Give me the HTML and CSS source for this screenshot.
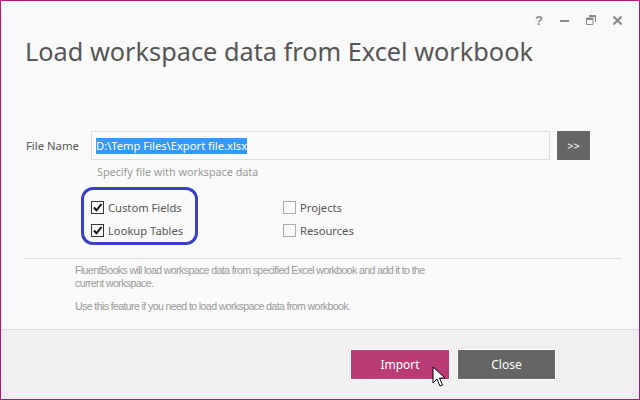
FILE: index.html
```html
<!DOCTYPE html>
<html>
<head>
<meta charset="utf-8">
<link rel="stylesheet" href="styles.css">
</head>
<body>
<div class="window">
  <div class="titlebar">
    <span class="tb-btn tb-help">?</span>
    <span class="tb-btn"><svg width="10" height="10" viewBox="0 0 10 10"><rect x="0" y="5" width="9" height="2" fill="#8a8a8a"/></svg></span>
    <span class="tb-btn"><svg width="10" height="10" viewBox="0 0 10 10"><path d="M3 0.5h6.5v6.5M0.5 3h6.5v6.5h-6.5z" fill="none" stroke="#8a8a8a" stroke-width="1"/><rect x="0.5" y="3" width="6.5" height="2" fill="#8a8a8a"/><rect x="3" y="0.5" width="6.5" height="1.5" fill="#8a8a8a"/></svg></span>
    <span class="tb-btn"><svg width="11" height="11" viewBox="0 0 11 11"><path d="M1.5 1.5l8 8M9.5 1.5l-8 8" stroke="#8a8a8a" stroke-width="2.2"/></svg></span>
  </div>
  <h1 class="title">Load workspace data from Excel workbook</h1>
  <div class="content">
    <div class="file-row">
      <label class="file-label">File Name</label>
      <div class="file-input"><span class="sel">D:\Temp Files\Export file.xlsx</span></div>
      <button class="browse">&gt;&gt;</button>
    </div>
    <div class="hint">Specify file with workspace data</div>
    <div class="checks">
      <div class="check"><span class="box checked"><svg width="11" height="11" viewBox="0 0 11 11"><path d="M2 5.5l2.5 2.8L9.5 2" fill="none" stroke="#111" stroke-width="2"/></svg></span>Custom Fields</div>
      <div class="check"><span class="box"></span>Projects</div>
      <div class="check"><span class="box checked"><svg width="11" height="11" viewBox="0 0 11 11"><path d="M2 5.5l2.5 2.8L9.5 2" fill="none" stroke="#111" stroke-width="2"/></svg></span>Lookup Tables</div>
      <div class="check"><span class="box"></span>Resources</div>
      <div class="highlight"></div>
    </div>
    <div class="sep"></div>
    <div class="desc">
      <p>FluentBooks will load workspace data from specified Excel workbook and add it to the current workspace.</p>
      <p>Use this feature if you need to load workspace data from workbook.</p>
    </div>
  </div>
  <div class="footer">
    <button class="btn btn-import">Import</button>
    <button class="btn btn-close">Close</button>
    <svg class="cursor" width="14" height="22" viewBox="0 0 14 22"><path d="M1 1v16l4-4 3 7 2.5-1-3-7h5.5z" fill="#fff" stroke="#000" stroke-width="1"/></svg>
  </div>
</div>
</body>
</html>
```
FILE: styles.css
```css
* { box-sizing: border-box; }
html, body { margin: 0; padding: 0; }
body { width: 640px; height: 400px; font-family: "Noto Sans", "Open Sans", sans-serif; }
.window {
  width: 640px; height: 400px;
  border: 1px solid #b3186f;
  background: #fafafa;
  display: flex; flex-direction: column;
}
.titlebar {
  height: 32px;
  display: flex; justify-content: flex-end; align-items: center;
  padding: 6px 9px 0 0;
}
.tb-btn { width: 26px; display: flex; justify-content: center; align-items: center; color: #8a8a8a; }
.tb-help { font: bold 13px "Liberation Sans", sans-serif; }
.title {
  margin: 0; padding-left: 24px;
  font-weight: 400; font-size: 25.3px; line-height: 36px;
  color: #555;
}
.content { flex: 1; padding: 0 17px 0 21px; position: relative; }
.file-row { display: flex; align-items: center; margin-top: 62px; height: 29px; }
.file-label { width: 69px; font-size: 11.3px; color: #555; padding-left: 4px; }
.file-input {
  width: 459px; height: 29px;
  border: 1px solid #ddd; background: #fafafa;
  display: flex; align-items: center; padding-left: 4px;
}
.sel { background: #3399ff; color: #fff; font-size: 11.2px; line-height: 16px; }
.browse {
  margin-left: 7px; width: 33px; height: 29px;
  border: none; background: #666; color: #fff; font: 11px "Noto Sans", sans-serif;
  padding: 0;
}
.hint { margin: 4px 0 0 75px; font-size: 10.8px; color: #999; }
.checks {
  position: relative;
  display: grid; grid-template-columns: 192px auto; row-gap: 7px;
  margin: 20px 0 0 69px; width: 400px;
  font-size: 11.2px; color: #555;
}
.check { display: flex; align-items: center; height: 16px; }
.box {
  width: 13px; height: 13px; border: 1px solid #aaa; background: #fafafa;
  margin-right: 4px; display: flex; align-items: center; justify-content: center;
}
.box.checked { border-color: #333; }
.highlight {
  position: absolute; left: -10px; top: -12px; width: 117px; height: 58px;
  border: 3px solid #3c40c4; border-radius: 12px;
}
.sep { height: 1px; background: #ddd; margin: 20px 0 0 1px; }
.desc { padding-left: 53px; font: 10.6px "Liberation Sans", sans-serif; letter-spacing: -0.62px; color: #999; }
.desc p { margin: 5px 0 10px; line-height: 13px; width: 352px; }
.footer {
  height: 70px; background: #f0f0f0; border-top: 1px solid #ddd;
  display: flex; justify-content: flex-end; align-items: flex-start;
  padding: 19px 83px 0 0; gap: 7px; position: relative;
}
.btn {
  width: 100px; height: 31px; border: 1px solid #fff; color: #fff;
  font: 12px "Noto Sans", sans-serif; padding: 0;
}
.btn-import { background: #b93c74; }
.btn-close { background: #666; width: 99px; }
.cursor { position: absolute; left: 431px; top: 36px; }
```
